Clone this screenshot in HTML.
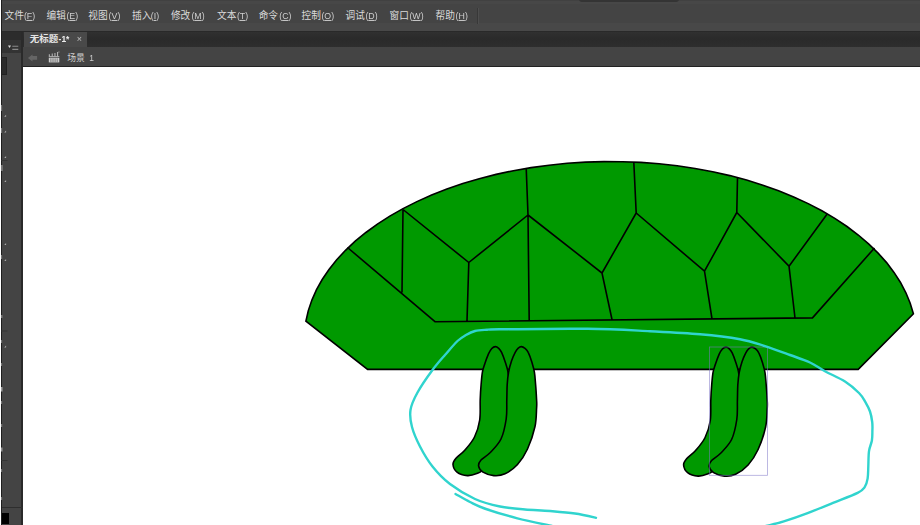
<!DOCTYPE html>
<html lang="zh"><head><meta charset="utf-8"><title>无标题-1</title>
<style>
html,body{margin:0;padding:0}
body{width:920px;height:525px;overflow:hidden;background:#fff;position:relative;font-family:"Liberation Sans",sans-serif}
.abs{position:absolute}
#menubar{left:0;top:0;width:920px;height:31px;background:#444}
#menutop{left:0;top:0;width:920px;height:1px;background:#414141}
#menutop2{left:0;top:1px;width:920px;height:3px;background:#474747}
#menublob{left:579px;top:-1px;width:100px;height:3.4px;background:#343434;border-radius:0 0 5px 5px;filter:blur(.7px)}
#menulow{left:0;top:23px;width:920px;height:8px;background:#484848}
#menusep{left:477px;top:8px;width:1px;height:16px;background:#383838;border-right:1px solid #4e4e4e}
#menuline{left:0;top:30.6px;width:920px;height:1.6px;background:#292929}
#tabstrip{left:23px;top:32px;width:897px;height:15px;background:linear-gradient(#303030,#2a2a2a 45%,#2e2e2e)}
#tab{left:24px;top:32px;width:63px;height:15px;background:#494949}
#scenebar{left:23px;top:46.5px;width:897px;height:19.7px;background:#444}
#sceneline{left:23px;top:66px;width:897px;height:.8px;background:#222}
#left{left:0;top:32px;width:23.3px;height:493px;background:#444}
#leftedge{left:0;top:0;width:1.6px;height:525px;background:linear-gradient(90deg,#fff 0,#fff .85px,#1e1e1e .85px,#1e1e1e 100%)}
#leftsep{left:21.2px;top:32px;width:2.1px;height:493px;background:#2a2a2a}
#lefthead{left:1px;top:32px;width:20.3px;height:21px;background:linear-gradient(#2c2c2c 0,#2c2c2c 38%,#343434 40%,#333 100%)}
#leftbox{left:1.5px;top:57.3px;width:5px;height:17.3px;background:#2b2b2b;border:1px solid #222;border-left:0;box-sizing:border-box}
#leftline{left:1px;top:507px;width:22px;height:1px;background:#2e2e2e}
#leftblack{left:1px;top:513px;width:8.4px;height:10.5px;background:#000}
.mk{position:absolute;top:10.6px;font-size:8.8px;line-height:10px;color:#cfcfcf;white-space:pre;transform:scaleY(.96);transform-origin:0 8.05px}
.mk u{text-decoration:underline;text-decoration-thickness:1px;text-underline-offset:.9px}
.t{position:absolute;color:#ddd;font-size:8.6px;line-height:10px;white-space:pre;transform:scaleY(.97);transform-origin:0 8px}
svg{position:absolute;left:0;top:0}
</style></head>
<body>
<div id="menubar" class="abs"></div><div id="menutop" class="abs"></div><div id="menutop2" class="abs"></div><div id="menublob" class="abs"></div><div id="menulow" class="abs"></div>
<div id="menusep" class="abs"></div><div id="menuline" class="abs"></div>
<div id="tabstrip" class="abs"></div><div id="tab" class="abs"></div>
<div id="scenebar" class="abs"></div><div id="sceneline" class="abs"></div>
<div id="left" class="abs"></div><div id="leftsep" class="abs"></div><div id="lefthead" class="abs"></div><div id="leftbox" class="abs"></div><div id="leftline" class="abs"></div><div id="leftblack" class="abs"></div><div id="leftedge" class="abs"></div>
<span class="mk" style="left:23.9px">(<u>F</u>)</span><span class="mk" style="left:66.4px">(<u>E</u>)</span><span class="mk" style="left:108.6px">(<u>V</u>)</span><span class="mk" style="left:150.8px">(<u>I</u>)</span><span class="mk" style="left:191.4px">(<u>M</u>)</span><span class="mk" style="left:236.9px">(<u>T</u>)</span><span class="mk" style="left:279.2px">(<u>C</u>)</span><span class="mk" style="left:321.4px">(<u>O</u>)</span><span class="mk" style="left:365.4px">(<u>D</u>)</span><span class="mk" style="left:409.4px">(<u>W</u>)</span><span class="mk" style="left:455.6px">(<u>H</u>)</span>
<span class="t" style="left:58.6px;top:34.3px;font-weight:bold;color:#eee;font-size:8.4px">-1*</span>
<span class="t" style="left:76.8px;top:34.2px;color:#c4c4c4;font-size:9px">×</span>
<span class="t" style="left:89.3px;top:52.8px;color:#ccc;font-size:8.4px">1</span>
<svg width="920" height="525" viewBox="0 0 920 525">
<g id="stage">
<path d="M305.9 321.2L308.3 310.6L311.9 300.1L316.5 289.7L322.2 279.5L329.0 269.5L336.7 259.8L345.5 250.3L355.2 241.2L365.9 232.5L377.4 224.1L389.8 216.1L403.0 208.6L416.9 201.6L431.6 195.1L446.9 189.1L462.8 183.6L479.2 178.7L496.1 174.4L513.4 170.7L531.1 167.6L549.0 165.2L567.2 163.3L585.5 162.1L604.0 161.6L622.4 161.7L640.8 162.4L659.1 163.8L677.2 165.8L695.1 168.5L712.7 171.7L729.9 175.6L746.6 180.1L762.9 185.2L778.6 190.8L793.7 196.9L808.2 203.6L821.9 210.8L834.8 218.4L847.0 226.5L858.3 235.0L868.6 243.9L878.1 253.1L886.6 262.6L894.0 272.4L900.5 282.5L905.9 292.8L910.2 303.2L913.4 313.8L858.2 369.4L367.6 369.4Z" fill="#009900" stroke="#000" stroke-width="1.6" stroke-linejoin="miter"/>
<path d="M347.5 247.5L435.0 321.7L812.5 317.9L874.5 248.0M403.0 209.5L402.0 292.5M403.0 209.5L468.8 262.5L467.0 321.0M468.8 262.5L528.0 215.0M526.2 168.0L528.0 215.0L529.2 320.8M528.0 215.0L602.0 273.0L612.0 319.5M602.0 273.0L636.2 213.0L633.8 162.0M636.2 213.0L704.5 271.2L712.0 318.8M704.5 271.2L736.8 212.5L737.5 177.5M736.8 212.5L789.0 266.2L795.0 318.0M789.0 266.2L827.0 214.2" fill="none" stroke="#000" stroke-width="1.6"/>
<g id="legs" fill="#009900" stroke="#000" stroke-width="1.6"><path d="M495.4 346.6C496.5 346.6 497.7 347.4 498.7 348.3C499.7 349.2 500.5 350.0 501.6 352.3C502.7 354.6 504.3 359.1 505.3 362.2C506.3 365.3 507.1 367.2 507.8 370.9C508.5 374.6 509.2 379.6 509.5 384.5C509.8 389.4 509.8 394.2 509.5 400.0C509.2 405.8 509.1 412.8 508.0 419.0C506.9 425.2 505.5 431.7 503.0 437.0C500.5 442.3 496.3 447.1 493.0 451.0C489.7 454.9 484.9 457.2 483.0 460.5C481.1 463.8 482.4 468.4 481.5 470.5C480.6 472.6 479.8 472.4 477.5 473.3C475.2 474.2 470.9 475.8 467.5 475.6C464.1 475.4 459.4 474.1 457.0 472.2C454.6 470.3 453.2 466.8 453.0 464.5C452.8 462.2 454.0 460.7 456.0 458.3C458.0 455.9 461.9 453.6 465.0 450.0C468.1 446.4 472.1 442.0 474.5 437.0C476.9 432.0 478.8 426.2 479.7 420.0C480.6 413.8 480.0 405.9 480.2 400.0C480.4 394.1 480.7 389.1 481.1 384.5C481.5 379.9 481.8 375.7 482.4 372.2C483.0 368.7 483.9 366.6 484.9 363.5C485.9 360.4 487.5 356.1 488.6 353.6C489.8 351.1 490.7 349.7 491.8 348.5C492.9 347.3 494.2 346.6 495.4 346.6Z"/><path d="M521.4 346.6C522.6 346.6 523.9 347.4 525.0 348.3C526.1 349.2 527.1 350.0 528.2 352.3C529.4 354.6 530.9 358.9 531.9 362.2C532.9 365.5 533.8 368.5 534.4 372.2C535.0 375.9 535.2 379.9 535.6 384.5C536.0 389.1 536.4 396.1 536.6 400.0C536.8 403.9 536.9 403.6 536.6 408.0C536.3 412.4 536.5 419.7 535.0 426.5C533.5 433.3 530.4 442.7 527.5 449.0C524.6 455.3 521.2 460.4 517.5 464.5C513.8 468.6 509.0 471.9 505.0 473.8C501.0 475.7 497.4 475.9 493.8 475.6C490.1 475.3 485.5 473.8 483.0 472.2C480.5 470.6 478.9 468.2 478.6 466.2C478.3 464.2 479.1 462.2 481.0 460.0C482.9 457.8 486.7 456.2 490.0 452.8C493.3 449.2 498.3 444.6 501.0 439.0C503.7 433.4 505.2 425.5 506.2 419.0C507.2 412.5 506.6 405.8 506.8 400.0C507.0 394.2 506.9 389.1 507.2 384.5C507.5 379.9 507.9 376.1 508.6 372.2C509.3 368.3 510.4 364.3 511.5 361.0C512.6 357.7 514.1 354.4 515.2 352.3C516.3 350.2 517.0 349.2 518.0 348.3C519.0 347.4 520.2 346.6 521.4 346.6Z"/></g>
<g fill="#009900" stroke="#000" stroke-width="1.6" transform="translate(230.6 .5)"><path d="M495.4 346.6C496.5 346.6 497.7 347.4 498.7 348.3C499.7 349.2 500.5 350.0 501.6 352.3C502.7 354.6 504.3 359.1 505.3 362.2C506.3 365.3 507.1 367.2 507.8 370.9C508.5 374.6 509.2 379.6 509.5 384.5C509.8 389.4 509.8 394.2 509.5 400.0C509.2 405.8 509.1 412.8 508.0 419.0C506.9 425.2 505.5 431.7 503.0 437.0C500.5 442.3 496.3 447.1 493.0 451.0C489.7 454.9 484.9 457.2 483.0 460.5C481.1 463.8 482.4 468.4 481.5 470.5C480.6 472.6 479.8 472.4 477.5 473.3C475.2 474.2 470.9 475.8 467.5 475.6C464.1 475.4 459.4 474.1 457.0 472.2C454.6 470.3 453.2 466.8 453.0 464.5C452.8 462.2 454.0 460.7 456.0 458.3C458.0 455.9 461.9 453.6 465.0 450.0C468.1 446.4 472.1 442.0 474.5 437.0C476.9 432.0 478.8 426.2 479.7 420.0C480.6 413.8 480.0 405.9 480.2 400.0C480.4 394.1 480.7 389.1 481.1 384.5C481.5 379.9 481.8 375.7 482.4 372.2C483.0 368.7 483.9 366.6 484.9 363.5C485.9 360.4 487.5 356.1 488.6 353.6C489.8 351.1 490.7 349.7 491.8 348.5C492.9 347.3 494.2 346.6 495.4 346.6Z"/><path d="M521.4 346.6C522.6 346.6 523.9 347.4 525.0 348.3C526.1 349.2 527.1 350.0 528.2 352.3C529.4 354.6 530.9 358.9 531.9 362.2C532.9 365.5 533.8 368.5 534.4 372.2C535.0 375.9 535.2 379.9 535.6 384.5C536.0 389.1 536.4 396.1 536.6 400.0C536.8 403.9 536.9 403.6 536.6 408.0C536.3 412.4 536.5 419.7 535.0 426.5C533.5 433.3 530.4 442.7 527.5 449.0C524.6 455.3 521.2 460.4 517.5 464.5C513.8 468.6 509.0 471.9 505.0 473.8C501.0 475.7 497.4 475.9 493.8 475.6C490.1 475.3 485.5 473.8 483.0 472.2C480.5 470.6 478.9 468.2 478.6 466.2C478.3 464.2 479.1 462.2 481.0 460.0C482.9 457.8 486.7 456.2 490.0 452.8C493.3 449.2 498.3 444.6 501.0 439.0C503.7 433.4 505.2 425.5 506.2 419.0C507.2 412.5 506.6 405.8 506.8 400.0C507.0 394.2 506.9 389.1 507.2 384.5C507.5 379.9 507.9 376.1 508.6 372.2C509.3 368.3 510.4 364.3 511.5 361.0C512.6 357.7 514.1 354.4 515.2 352.3C516.3 350.2 517.0 349.2 518.0 348.3C519.0 347.4 520.2 346.6 521.4 346.6Z"/></g>
<rect x="709.5" y="347" width="58" height="128.3" fill="none" stroke="#7f78c8" stroke-opacity=".65" stroke-width=".8"/>
<path d="M596.0 517.8C592.5 517.0 582.7 514.6 575.0 513.5C567.3 512.4 558.3 511.7 550.0 511.0C541.7 510.3 533.3 510.2 525.0 509.5C516.7 508.8 508.3 508.2 500.0 506.5C491.7 504.8 483.3 502.8 475.0 499.0C466.7 495.2 457.1 489.4 450.0 484.0C442.9 478.6 437.5 472.8 432.5 466.5C427.5 460.2 423.4 453.1 420.0 446.5C416.6 439.9 413.6 433.1 412.0 427.0C410.4 420.9 409.6 415.8 410.5 410.0C411.4 404.2 413.8 399.2 417.5 392.5C421.2 385.8 427.9 376.2 432.5 370.0C437.1 363.8 440.8 359.8 445.0 355.0C449.2 350.2 454.0 344.3 457.5 341.0C461.0 337.7 463.1 336.7 466.0 335.0C468.9 333.3 471.5 331.9 475.0 331.0C478.5 330.1 482.8 330.0 487.0 329.7C491.2 329.4 483.2 329.5 500.0 329.3C516.8 329.1 562.5 328.4 587.5 328.8C612.5 329.1 631.2 330.3 650.0 331.2C668.8 332.2 685.0 333.0 700.0 334.3C715.0 335.6 729.2 337.3 740.0 339.2C750.8 341.2 756.7 343.6 765.0 346.2C773.3 348.9 782.5 352.3 790.0 355.0C797.5 357.7 804.2 359.8 810.0 362.5C815.8 365.2 819.2 368.1 825.0 371.2C830.8 374.4 839.3 377.9 845.0 381.5C850.7 385.1 855.7 389.7 859.0 393.0C862.3 396.3 863.2 398.3 865.0 401.4C866.8 404.5 868.8 408.1 870.0 411.5C871.2 414.9 871.8 418.9 872.2 422.0C872.6 425.1 872.5 426.9 872.4 430.0C872.3 433.1 872.5 437.0 871.9 440.5C871.3 444.0 869.6 446.8 869.0 451.2C868.4 455.6 868.5 462.1 868.3 466.7C868.1 471.3 868.2 475.2 867.6 478.6C867.0 482.0 866.5 484.5 864.8 486.9C863.1 489.3 863.2 490.1 857.6 492.9C852.0 495.7 839.7 500.2 831.4 503.6C823.1 507.0 815.5 510.1 807.6 513.1C799.7 516.1 790.7 519.2 783.8 521.4C776.9 523.5 769.0 525.2 766.0 526.0" fill="none" stroke="#30d4ce" stroke-width="2.4" stroke-linecap="round" stroke-linejoin="round"/>
<path d="M455.5 494.0C457.9 495.3 464.9 499.5 470.0 502.0C475.1 504.5 478.1 506.3 486.0 509.0C493.9 511.7 506.4 515.5 517.4 518.3C528.4 521.1 546.2 524.7 552.0 526.0" fill="none" stroke="#30d4ce" stroke-width="2.4" stroke-linecap="round" stroke-linejoin="round"/>
</g>
<g id="ui">
<g fill="#dadada" aria-label="menu" font-family='"Liberation Sans","Noto Sans CJK SC",sans-serif' font-size="9.7"><text x="4.5" y="18.9">文件</text><text x="46.6" y="18.9">编辑</text><text x="88.3" y="18.9">视图</text><text x="132.1" y="18.9">插入</text><text x="170.9" y="18.9">修改</text><text x="217" y="18.9">文本</text><text x="258.7" y="18.9">命令</text><text x="301.6" y="18.9">控制</text><text x="345.5" y="18.9">调试</text><text x="389.6" y="18.9">窗口</text><text x="435.6" y="18.9">帮助</text></g>
<g fill="#e4e4e4"><text transform="translate(29.7 42.2) scale(1 .905)" font-family='"Liberation Sans","Noto Sans CJK SC",sans-serif' font-size="9.5" font-weight="bold">无标题</text></g>
<g fill="#cfcfcf"><text transform="translate(67.2 61.2) scale(1 1.09)" font-family='"Liberation Sans","Noto Sans CJK SC",sans-serif' font-size="8.8">场景</text></g>
<!-- back arrow -->
<path d="M27.9 57.9l4.6-3.5v1.7h4.6v3.6h-4.6v1.7z" fill="#656565"/>
<!-- clapper icon -->
<g fill="#cdcdcd"><rect x="48.8" y="57.9" width="10.5" height="4.5"/><rect x="48.8" y="56.3" width="10.5" height=".9"/><path d="M48.8 54.3h1.1v2h-1.1zM51.7 53.6h1.1v2.7h-1.1zM54.4 52.9h1.1v3.4h-1.1zM57 52.1h1.1v4.2h-1.1zM58.5 51.4h.9v1h-.9z" opacity=".8"/></g>
<g stroke="#444" stroke-width=".6"><path d="M50.9 58.3v3.7M53 58.3v3.7M55.1 58.3v3.7M57.2 58.3v3.7"/></g>
<!-- panel menu icon -->
<path d="M8 45.6h3l-1.5 2.4z" fill="#ddd"/><path d="M12.3 45.7h6v1.1h-6zM12.3 48.8h6v1.1h-6z" fill="#8a8a8a"/>
<!-- toolbar specks -->
<g fill="#a8a8a8">
<path d="M4.2 116.8l1.9-2v2zM4.2 132.4l1.9-2v2zM4.2 158.1l1.9-2v2zM4.2 182.1l1.9-2v2zM4.2 245l1.9-2v2zM4.2 261l1.9-2v2zM4.2 347.5l1.9-2v2z"/>
</g>
<g fill="#8c8c8c">
<rect x="1.2" y="105" width=".9" height="6"/><rect x="1.2" y="128" width=".9" height="5"/><rect x="1.2" y="165" width="1.4" height="6"/><rect x="1.2" y="255" width=".9" height="4"/>
<rect x="1.2" y="315" width="1.2" height="3"/><rect x="1.2" y="340" width=".9" height="3"/><rect x="1.2" y="363" width=".9" height="3"/>
<rect x="1.2" y="387" width="1.2" height="4.5" fill="#bdbdbd"/><rect x="1.2" y="401" width=".9" height="3"/><rect x="1.2" y="424" width="1" height="3"/><rect x="1.2" y="447.5" width="1.2" height="4" fill="#b0b0b0"/>
<rect x="1.2" y="469" width=".9" height="3"/><rect x="1.2" y="497" width=".9" height="3"/>
</g>
<g fill="#333"><rect x="1" y="160" width="6.5" height=".8"/><rect x="1" y="330.6" width="6.5" height=".8"/><rect x="1" y="460" width="6.5" height=".8"/></g>
</g>
</svg>
</body></html>
